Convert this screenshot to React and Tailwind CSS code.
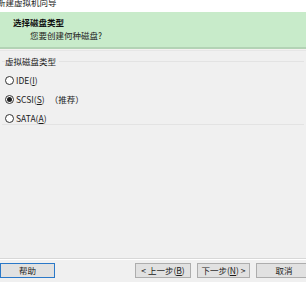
function Radio({ checked, label, hotkey, extra }) {
  return (
    <div className="flex items-center h-[12px]">
      <span className="w-[9px] h-[9px] rounded-full border border-[#333] bg-white flex items-center justify-center">
        {checked && <span className="w-[5px] h-[5px] rounded-full bg-[#222]" />}
      </span>
      <span className="ml-[2px] text-[#1a1a1a]">
        {label}(<span className="underline">{hotkey}</span>)
      </span>
      {extra && <span className="ml-[5px] text-[#1a1a1a]">{extra}</span>}
    </div>
  );
}

function Btn({ children, primary, className = "" }) {
  return (
    <div
      className={
        "h-[15px] flex items-center justify-center bg-[#e1e1e1] text-[#1a1a1a] border " +
        (primary ? "border-[#2a78c8]" : "border-[#adadad]") +
        " " +
        className
      }
    >
      {children}
    </div>
  );
}

export default function App() {
  return (
    <div
      className="w-[306px] h-[282px] overflow-hidden bg-[#f0f0f0] flex flex-col text-[8.5px] leading-none"
      style={{ fontFamily: '"Noto Sans CJK SC", "Noto Sans", sans-serif' }}
    >
      {/* title bar */}
      <div className="h-[12px] bg-white overflow-hidden">
        <div className="-mt-[2px] -ml-[3px] text-[#222] text-[8.5px]">新建虚拟机向导</div>
      </div>

      {/* header */}
      <div className="h-[37px] bg-[#c8ebca] border-b-2 border-[#b3d3b5] flex flex-col pt-[6px]">
        <div className="pl-[13px] font-bold text-[#111]">选择磁盘类型</div>
        <div className="pl-[30px] mt-[4px] text-[#222]">您要创建何种磁盘?</div>
      </div>
      <div className="h-[2px] bg-[#f5f1f1] border-b border-[#e6e6e6]" />

      {/* body */}
      <div className="flex-1 flex flex-col pt-[10px]">
        <div className="mx-[2px] border-t border-[#e3e3e3] relative h-[64px] border-b">
          <div className="absolute -top-[5px] left-[3px] bg-[#f0f0f0] pr-[3px] text-[#1a1a1a]">
            虚拟磁盘类型
          </div>
          <div className="flex flex-col gap-[7px] pl-[3px] pt-[12px]">
            <Radio label="IDE" hotkey="I" />
            <Radio checked label="SCSI" hotkey="S" extra="（推荐）" />
            <Radio label="SATA" hotkey="A" />
          </div>
        </div>
      </div>

      {/* footer */}
      <div className="h-[1px] bg-[#d8d8d8]" />
      <div className="h-[1px] bg-white" />
      <div className="flex items-center h-[22px] pb-[2px]">
        <Btn primary className="w-[55px]">帮助</Btn>
        <div className="flex-1" />
        <Btn className="w-[56px]">
          &lt; 上一步(<span className="underline">B</span>)
        </Btn>
        <Btn className="w-[53px] ml-[6px]">
          下一步(<span className="underline">N</span>) &gt;
        </Btn>
        <Btn className="w-[56px] ml-[6px] -mr-[6px]">取消</Btn>
      </div>
    </div>
  );
}
